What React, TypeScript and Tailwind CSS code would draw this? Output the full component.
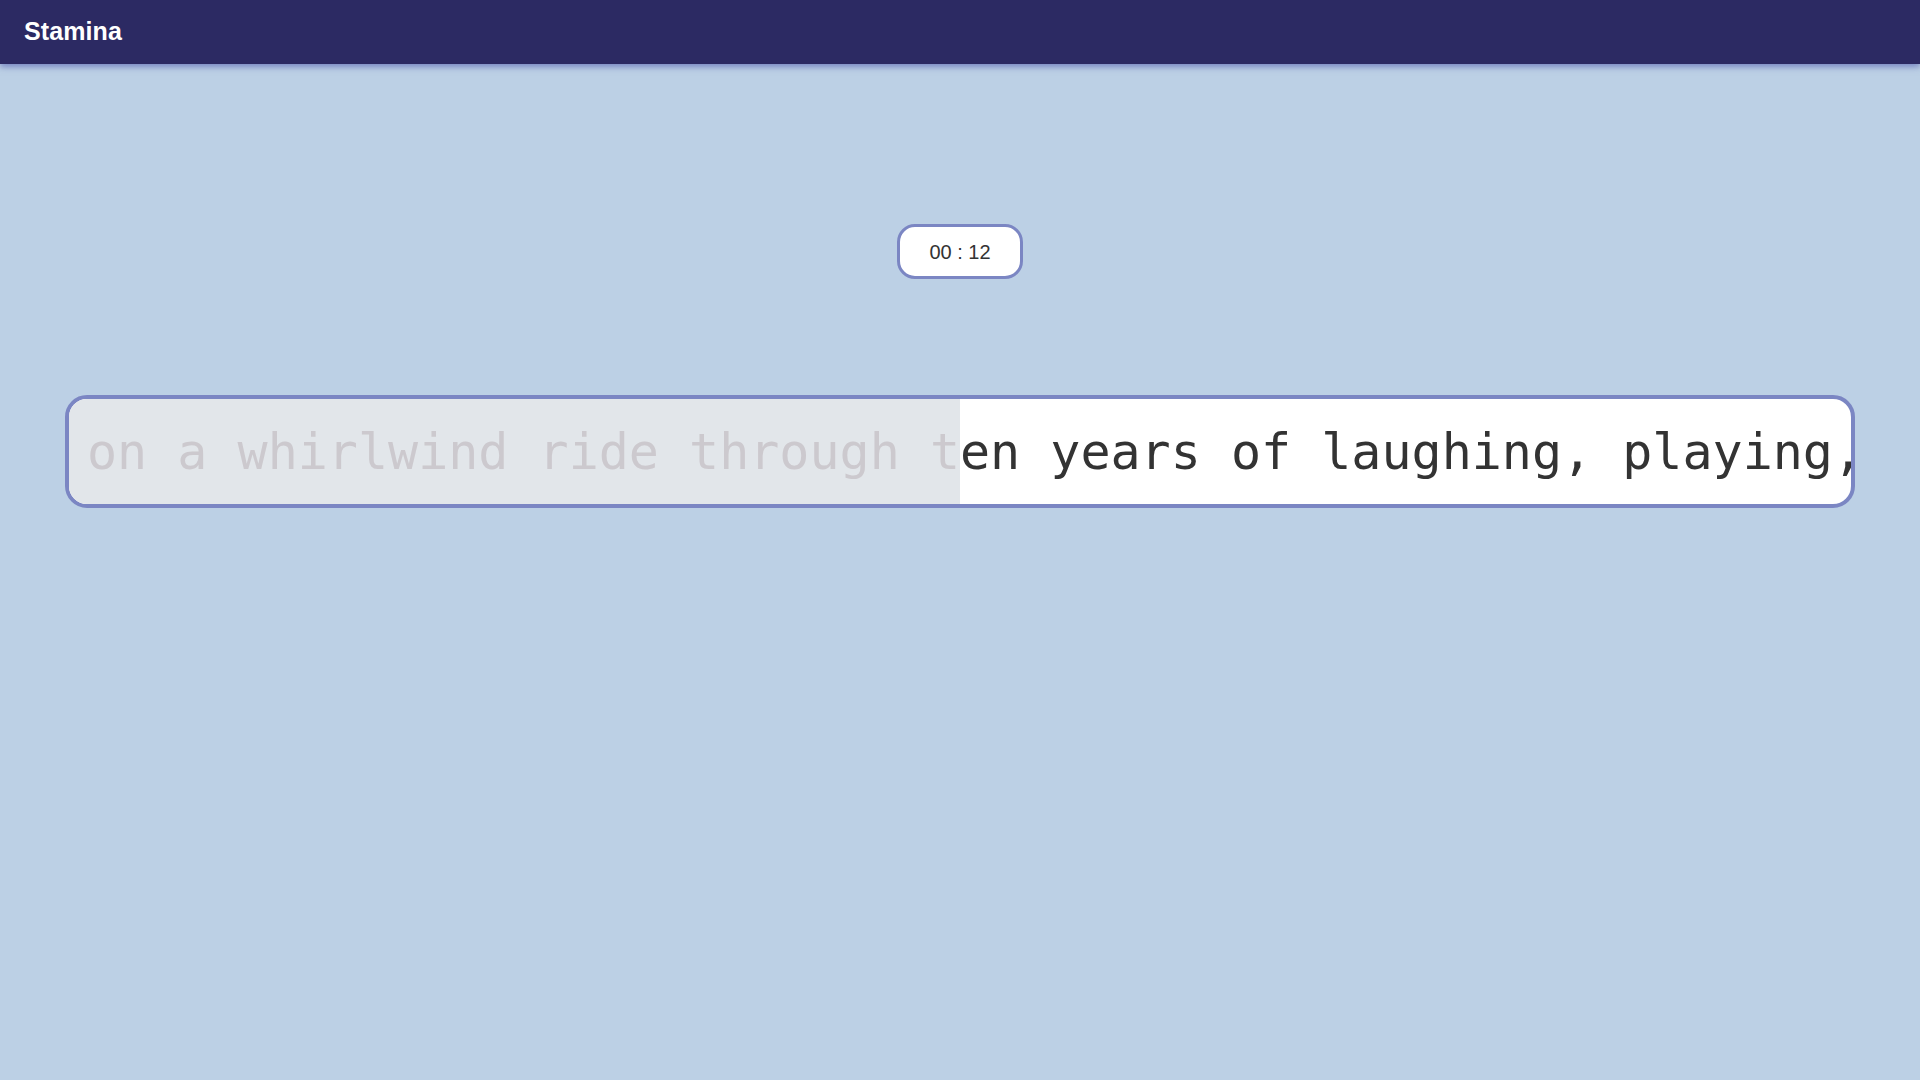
import React from 'react';

const typed = 'on a whirlwind ride through t';
const remaining = 'en years of laughing, playing, and growing together';

function App() {
  return (
    <div className="min-h-screen bg-[#bcd0e5] font-['Liberation_Sans',Arial,sans-serif]">
      {/* Top bar */}
      <header className="h-16 bg-[#2c2a63] flex items-center px-6 shadow-[0_3px_6px_rgba(70,80,170,0.55)] relative z-10">
        <h1 className="text-[25px] font-bold text-white tracking-[0.1px]">Stamina</h1>
      </header>

      <main className="flex flex-col items-center pt-40">
        {/* Timer */}
        <div className="w-[126px] h-[55px] rounded-[18px] border-[3px] border-[#7b86c3] bg-white flex items-center justify-center text-[20px] text-[#333]">
          00 : 12
        </div>

        {/* Typing strip */}
        <div className="mt-[116px] self-stretch mx-[65px] h-[113px] rounded-[22px] border-4 border-[#7b86c3] bg-white overflow-hidden flex font-['DejaVu_Sans_Mono',monospace] text-[50px] leading-none">
          <div className="w-[891px] shrink-0 bg-[#e2e6ea] flex items-center justify-end overflow-hidden whitespace-pre text-[#ccc9ce]">
            {typed}
          </div>
          <div className="flex-1 flex items-center overflow-hidden whitespace-pre text-[#333]">
            {remaining}
          </div>
        </div>
      </main>
    </div>
  );
}

export default App;
